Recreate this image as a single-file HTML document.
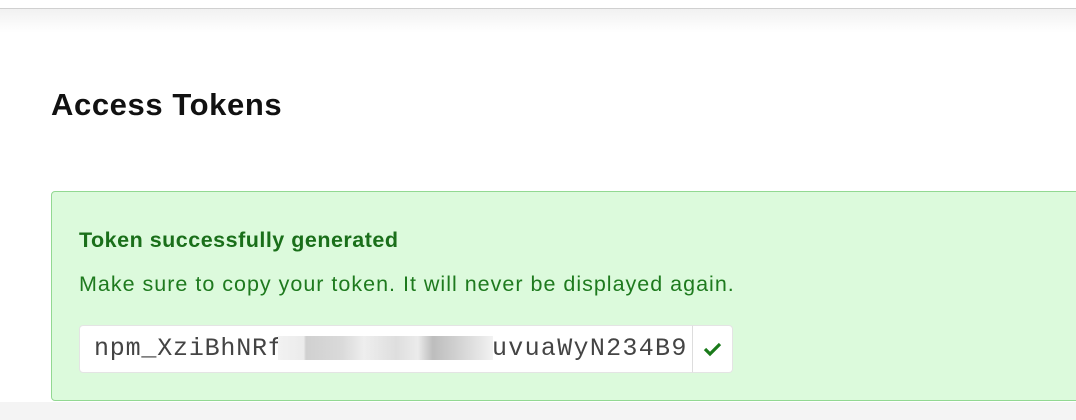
<!DOCTYPE html>
<html><head><meta charset="utf-8"><style>
html,body{margin:0;padding:0;width:1076px;height:420px;overflow:hidden;background:#fff;font-family:"Liberation Sans",sans-serif;}
.top{position:absolute;left:0;top:0;width:1076px;height:8px;background:#fff;border-bottom:1px solid #d0d0d0;}
.grad{position:absolute;left:0;top:9px;width:1076px;height:24px;background:linear-gradient(#f1f1f1,#fff);}
h1{position:absolute;left:51px;top:87px;margin:0;font-size:31px;font-weight:bold;color:#111;letter-spacing:0.6px;}
.box{position:absolute;left:51px;top:191px;width:1040px;height:208px;background:#dcfadc;border:1px solid #92d892;border-radius:4px;}
.below{position:absolute;left:0;top:402px;width:1076px;height:18px;background:#f4f4f4;}
.t{position:absolute;left:27px;top:36px;font-size:21.5px;font-weight:bold;color:#1a6f1a;letter-spacing:0.5px;}
.m{position:absolute;left:27px;top:80px;font-size:21.5px;color:#1e7a1e;letter-spacing:1.0px;}
.inp{position:absolute;left:27px;top:133px;width:612px;height:46px;background:#fff;border:1px solid #e4e4e4;border-radius:4px 0 0 4px;font-family:"Liberation Mono",monospace;font-size:25px;color:#444;line-height:46px;}
.btn{position:absolute;left:640px;top:133px;width:39px;height:46px;background:#fff;border:1px solid #e4e4e4;border-left:1px solid #ddd;border-radius:0 4px 4px 0;}
.a{position:absolute;left:14px;top:0;letter-spacing:0.8px;}
.b{position:absolute;left:412px;top:0;letter-spacing:1.3px;}
.blur{position:absolute;top:10px;height:24px;}
</style></head><body>
<div class="top"></div><div class="grad"></div>
<h1>Access Tokens</h1>
<div class="below"></div>
<div class="box">
<div class="t">Token successfully generated</div>
<div class="m">Make sure to copy your token. It will never be displayed again.</div>
<div class="inp"><span class="a">npm_XziBhNRf</span>
<div class="blur" style="left:198px;width:215px;background:linear-gradient(90deg,#f2f2f2 0,#ebebeb 12%,#d0d0d0 13%,#dadada 30%,#eeeeee 40%,#dedede 55%,#ebebeb 65%,#bdbdbd 72%,#cfcfcf 82%,#e2e2e2 92%,#f2f2f2 100%);"></div>
<span class="b">uvuaWyN234B9</span></div>
<div class="btn"><svg width="39" height="46" viewBox="0 0 39 46"><path d="M12 23 L17 28 L27 18" stroke="#1a7a1a" stroke-width="3.2" fill="none"/></svg></div>
</div>
</body></html>
